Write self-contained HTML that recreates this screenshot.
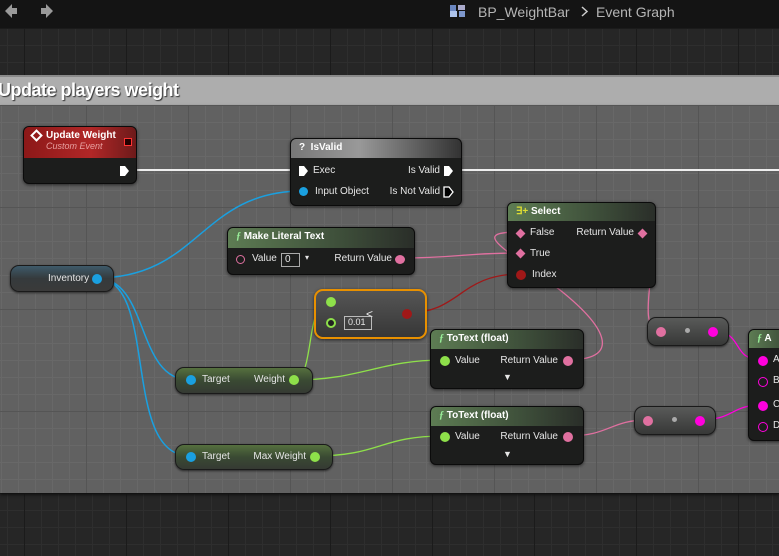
<!DOCTYPE html>
<html><head><meta charset="utf-8"><style>
*{margin:0;padding:0;box-sizing:border-box}
body{width:779px;height:556px;overflow:hidden;position:relative;font-family:"Liberation Sans",sans-serif;background:#262626}
.grid{position:absolute;left:0;width:779px;background-color:#262626;
background-image:linear-gradient(#1b1b1b 1px,transparent 1px),linear-gradient(90deg,#1b1b1b 1px,transparent 1px),linear-gradient(#2e2e2e 1px,transparent 1px),linear-gradient(90deg,#2e2e2e 1px,transparent 1px);
background-size:102px 102px,102px 102px,17px 17px,17px 17px;background-position:24px 0,24px 0,7px 0,7px 0}
.body{position:absolute;left:0;top:105px;width:779px;height:388px;background-color:#616161;
background-image:linear-gradient(#555 1px,transparent 1px),linear-gradient(90deg,#555 1px,transparent 1px),linear-gradient(#686868 1px,transparent 1px),linear-gradient(90deg,#686868 1px,transparent 1px);
background-size:102px 102px,102px 102px,17px 17px,17px 17px;background-position:86px 0,86px 0,1px 0,1px 0;box-shadow:0 2px 3px #111}
.node{position:absolute;background:#1c1d1c;border-radius:6px;border:1px solid #0b0b0b;box-shadow:0 1px 3px rgba(0,0,0,.6);color:#ddd;font-size:10px}
.hd{position:absolute;left:0;top:0;right:0;border-radius:5px 5px 0 0;color:#fff;font-weight:bold;font-size:10px;padding-left:8px}
.gh{background:linear-gradient(90deg,#5d7c53,#3e4f3a 60%,#2a2e29)}
.t{position:absolute;font-size:10px;color:#e6e6e6;white-space:nowrap}
.pill{position:absolute;border-radius:9px;background:linear-gradient(#595a59,#373837);border:1px solid #1a1a1a;box-shadow:0 1px 2px rgba(0,0,0,.6)}
</style></head><body>
<div style="position:absolute;left:0;top:0;width:779px;height:28px;background:#141414"></div>
<div class="grid" style="top:28px;height:47px"></div>
<div class="grid" style="top:493px;height:63px"></div>
<div style="position:absolute;left:0;top:75px;width:779px;height:30px;background:#adadad;border-top:2px solid #8a8a8a"></div>
<div style="position:absolute;left:-2px;top:80px;font-size:18px;font-weight:bold;color:#fff;letter-spacing:-0.5px;text-shadow:1px 1px 1px #333">Update players weight</div>
<div class="body"></div>
<svg style="position:absolute;left:0;top:0" width="779" height="30">
<path d="M5 11 L12 4 L12 18 Z M12 8 h5 v6 h-5z" fill="#9a9a9a"/>
<path d="M53 11 L46 4 L46 18 Z M46 8 h-5 v6 h5z" fill="#9a9a9a"/>
<rect x="450" y="5" width="6" height="6" fill="#6a86c0"/><rect x="458" y="5" width="7" height="5" fill="#aac"/>
<rect x="450" y="11" width="7" height="6" fill="#adc3ec"/><rect x="459" y="11" width="6" height="6" fill="#7d97cc"/>
<text x="478" y="17" font-family="Liberation Sans" font-size="14" fill="#b5b5b5">BP_WeightBar</text>
<path d="M582 7 L587 11.5 L582 16" stroke="#ccc" stroke-width="1.5" fill="none"/>
<text x="596" y="17" font-family="Liberation Sans" font-size="14" fill="#b5b5b5">Event Graph</text>
</svg>
<svg style="position:absolute;left:0;top:0" width="779" height="556" fill="none">
<path d="M128 170 H296 M452 170 H779" stroke="#eee" stroke-width="2"/>
<path d="M96 278 C200 278 200 191 303 191" stroke="#1aa0e0" stroke-width="1.5"/>
<path d="M96 278 C150 278 135 380 190 380" stroke="#1aa0e0" stroke-width="1.5"/>
<path d="M96 278 C160 278 120 456 190 456" stroke="#1aa0e0" stroke-width="1.5"/>
<path d="M294 380 C360 380 380 360 443 360" stroke="#8ee04a" stroke-width="1.3"/>
<path d="M294 380 C315 380 305 301 329 301" stroke="#8ee04a" stroke-width="1.3"/>
<path d="M314 456 C380 456 380 436 443 436" stroke="#8ee04a" stroke-width="1.3"/>
<path d="M407 313 C460 313 460 274 520 274" stroke="#a01818" stroke-width="1.3"/>
<path d="M399 258 C460 258 460 253 520 253" stroke="#e070a0" stroke-width="1.3"/>
<path d="M567 360 C620 360 610 330 560 290 C500 245 470 232 520 232" stroke="#e070a0" stroke-width="1.3"/>
<path d="M641 232 C670 232 630 331 660 331" stroke="#e070a0" stroke-width="1.3"/>
<path d="M567 436 C610 436 610 420 647 420" stroke="#e070a0" stroke-width="1.3"/>
<path d="M712 331 C745 331 730 360 762 360" stroke="#ff00dd" stroke-width="1.3"/>
<path d="M699 420 C735 420 730 405 762 405" stroke="#ff00dd" stroke-width="1.3"/>
</svg>

<div class="node" style="left:23px;top:126px;width:114px;height:58px">
<div class="hd" style="height:31px;background:linear-gradient(90deg,#8c1818,#b12727 60%,#6d1a1a);padding-left:22px">
<div style="position:absolute;left:8px;top:4px;width:9px;height:9px;border:2px solid #fff;transform:rotate(45deg)"></div>
<div style="padding-top:3px">Update Weight</div>
<div style="font-weight:normal;font-style:italic;color:#e8a0a0;font-size:9px">Custom Event</div></div>
<div style="position:absolute;right:4px;top:11px;width:8px;height:8px;border:1px solid #f33;background:#200"></div>
<svg style="position:absolute;left:95px;top:38px" width="12" height="12"><path d="M1 1 H6 L10 6 L6 11 H1 Z" fill="#fff"/></svg>
</div>

<div class="node" style="left:290px;top:138px;width:172px;height:68px">
<div class="hd" style="height:19px;background:linear-gradient(90deg,#777,#999 40%,#333);padding-top:3px">? &nbsp;IsValid</div>
<svg style="position:absolute;left:7px;top:26px" width="12" height="12"><path d="M1 1 H6 L10 6 L6 11 H1 Z" fill="#fff"/></svg>
<div class="t" style="left:22px;top:26px">Exec</div>
<div class="t" style="right:21px;top:26px">Is Valid</div>
<svg style="position:absolute;left:152px;top:26px" width="12" height="12"><path d="M1 1 H6 L10 6 L6 11 H1 Z" fill="#fff"/></svg>
<div style="position:absolute;left:8px;top:48px;width:9px;height:9px;border-radius:50%;background:#1aa0e0"></div>
<div class="t" style="left:24px;top:47px">Input Object</div>
<div class="t" style="right:21px;top:47px">Is Not Valid</div>
<svg style="position:absolute;left:152px;top:47px" width="12" height="12"><path d="M1 1 H6 L10 6 L6 11 H1 Z" stroke="#fff" stroke-width="1.3"/></svg>
</div>

<div class="node" style="left:227px;top:227px;width:188px;height:48px">
<div class="hd gh" style="height:20px;padding-top:3px"><i style="font-family:'Liberation Serif';color:#9e9">ƒ</i> Make Literal Text</div>
<div style="position:absolute;left:8px;top:27px;width:9px;height:9px;border-radius:50%;border:1.5px solid #e070a0"></div>
<div class="t" style="left:24px;top:25px">Value</div>
<div class="t" style="left:53px;top:25px;border:1px solid #aaa;width:19px;height:14px;padding-left:3px">0</div>
<div class="t" style="left:77px;top:25px;font-size:8px">▾</div>
<div class="t" style="right:22px;top:25px">Return Value</div>
<div style="position:absolute;left:167px;top:27px;width:10px;height:9px;border-radius:50%;background:#e070a0"></div>
</div>

<div class="pill" style="left:10px;top:265px;width:104px;height:27px;background:linear-gradient(#3e5a6a,#353a3c 50%,#3a3a3a)"><div class="t" style="left:37px;top:7px">Inventory</div>
<div style="position:absolute;left:81px;top:8px;width:10px;height:10px;border-radius:50%;background:#1aa0e0"></div></div>

<div class="node" style="left:507px;top:202px;width:149px;height:86px">
<div class="hd gh" style="height:18px;padding-top:3px"><span style="color:#dd3">∃+</span> Select</div>
<div style="position:absolute;left:9px;top:27px;width:7px;height:7px;background:#e070a0;transform:rotate(45deg)"></div>
<div class="t" style="left:22px;top:24px">False</div>
<div class="t" style="right:21px;top:24px">Return Value</div>
<div style="position:absolute;left:131px;top:27px;width:7px;height:7px;background:#e070a0;transform:rotate(45deg)"></div>
<div style="position:absolute;left:9px;top:47px;width:7px;height:7px;background:#e070a0;transform:rotate(45deg)"></div>
<div class="t" style="left:22px;top:45px">True</div>
<div style="position:absolute;left:8px;top:67px;width:10px;height:10px;border-radius:50%;background:#a01818"></div>
<div class="t" style="left:24px;top:66px">Index</div>
</div>

<div class="node" style="left:314px;top:289px;width:113px;height:50px;border:2px solid #e89000;background:linear-gradient(#555,#373737);border-radius:9px">
<div style="position:absolute;left:10px;top:6px;width:10px;height:10px;border-radius:50%;background:#8ee04a"></div>
<div style="position:absolute;left:10px;top:27px;width:10px;height:10px;border-radius:50%;border:2px solid #8ee04a;background:#222"></div>
<div class="t" style="left:28px;top:25px;border:1px solid #bbb;width:28px;height:14px;padding-left:3px;font-size:9px">0.01</div>
<div class="t" style="left:50px;top:16px;font-size:12px">&lt;</div>
<div style="position:absolute;left:86px;top:18px;width:10px;height:10px;border-radius:50%;background:#a01818"></div>
</div>

<div class="node" style="left:430px;top:329px;width:154px;height:60px">
<div class="hd gh" style="height:19px;padding-top:3px"><i style="font-family:'Liberation Serif';color:#9e9">ƒ</i> ToText (float)</div>
<div style="position:absolute;left:9px;top:26px;width:10px;height:10px;border-radius:50%;background:#8ee04a"></div>
<div class="t" style="left:24px;top:25px">Value</div>
<div class="t" style="right:25px;top:25px">Return Value</div>
<div style="position:absolute;left:132px;top:26px;width:10px;height:10px;border-radius:50%;background:#e070a0"></div>
<div class="t" style="left:72px;top:42px;font-size:9px">▼</div>
</div>
<div class="node" style="left:430px;top:406px;width:154px;height:59px">
<div class="hd gh" style="height:19px;padding-top:3px"><i style="font-family:'Liberation Serif';color:#9e9">ƒ</i> ToText (float)</div>
<div style="position:absolute;left:9px;top:25px;width:10px;height:10px;border-radius:50%;background:#8ee04a"></div>
<div class="t" style="left:24px;top:24px">Value</div>
<div class="t" style="right:25px;top:24px">Return Value</div>
<div style="position:absolute;left:132px;top:25px;width:10px;height:10px;border-radius:50%;background:#e070a0"></div>
<div class="t" style="left:72px;top:42px;font-size:9px">▼</div>
</div>

<div class="pill" style="left:175px;top:367px;width:138px;height:27px;background:linear-gradient(#55703e,#3a4a33 50%,#353a33)">
<div style="position:absolute;left:10px;top:7px;width:10px;height:10px;border-radius:50%;background:#1aa0e0"></div>
<div class="t" style="left:26px;top:6px">Target</div><div class="t" style="right:27px;top:6px">Weight</div>
<div style="position:absolute;left:113px;top:7px;width:10px;height:10px;border-radius:50%;background:#8ee04a"></div></div>
<div class="pill" style="left:175px;top:444px;width:158px;height:26px;background:linear-gradient(#55703e,#3a4a33 50%,#353a33)">
<div style="position:absolute;left:10px;top:7px;width:10px;height:10px;border-radius:50%;background:#1aa0e0"></div>
<div class="t" style="left:26px;top:6px">Target</div><div class="t" style="right:26px;top:6px">Max Weight</div>
<div style="position:absolute;left:134px;top:7px;width:10px;height:10px;border-radius:50%;background:#8ee04a"></div></div>

<div class="pill" style="left:647px;top:317px;width:82px;height:29px">
<div style="position:absolute;left:8px;top:9px;width:10px;height:10px;border-radius:50%;background:#e070a0"></div>
<div style="position:absolute;left:37px;top:10px;width:5px;height:5px;border-radius:50%;background:#aaa"></div>
<div style="position:absolute;left:60px;top:9px;width:10px;height:10px;border-radius:50%;background:#ff00dd"></div></div>
<div class="pill" style="left:634px;top:406px;width:82px;height:29px">
<div style="position:absolute;left:8px;top:9px;width:10px;height:10px;border-radius:50%;background:#e070a0"></div>
<div style="position:absolute;left:37px;top:10px;width:5px;height:5px;border-radius:50%;background:#aaa"></div>
<div style="position:absolute;left:60px;top:9px;width:10px;height:10px;border-radius:50%;background:#ff00dd"></div></div>

<div class="node" style="left:748px;top:329px;width:60px;height:112px">
<div class="hd gh" style="height:18px;padding-top:3px"><i style="font-family:'Liberation Serif';color:#9e9">ƒ</i> A</div>
<div style="position:absolute;left:9px;top:26px;width:10px;height:10px;border-radius:50%;background:#ff00dd"></div><div class="t" style="left:24px;top:24px">A</div>
<div style="position:absolute;left:9px;top:47px;width:10px;height:10px;border-radius:50%;border:1.5px solid #ff00dd"></div><div class="t" style="left:24px;top:45px">B</div>
<div style="position:absolute;left:9px;top:71px;width:10px;height:10px;border-radius:50%;background:#ff00dd"></div><div class="t" style="left:24px;top:69px">C</div>
<div style="position:absolute;left:9px;top:92px;width:10px;height:10px;border-radius:50%;border:1.5px solid #ff00dd"></div><div class="t" style="left:24px;top:90px">D</div>
</div>
</body></html>
